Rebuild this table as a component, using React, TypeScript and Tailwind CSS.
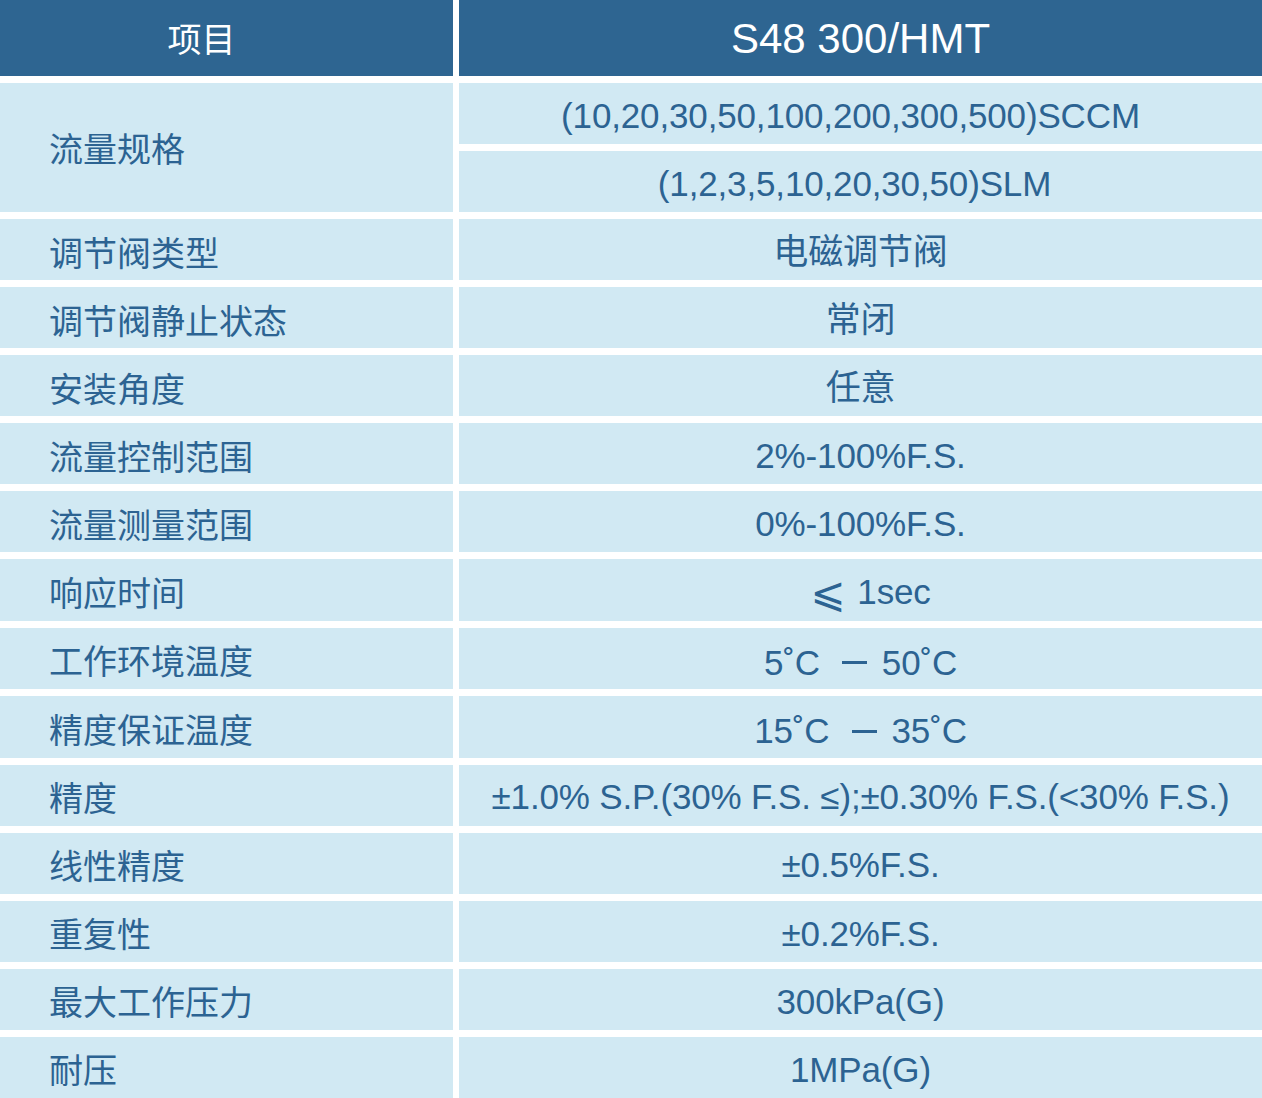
import React from 'react';

const rows: { label: string; value: React.ReactNode }[] = [
  { label: '调节阀类型', value: '电磁调节阀' },
  { label: '调节阀静止状态', value: '常闭' },
  { label: '安装角度', value: '任意' },
  { label: '流量控制范围', value: '2%-100%F.S.' },
  { label: '流量测量范围', value: '0%-100%F.S.' },
  {
    label: '响应时间',
    value: (
      <span className="flex items-center pl-[20px]">
        <span className="font-['DejaVu_Sans'] text-[42px] leading-none">⩽</span>
        <span className="ml-[12px]">1sec</span>
      </span>
    ),
  },
  {
    label: '工作环境温度',
    value: <TempRange from="5" to="50" />,
  },
  {
    label: '精度保证温度',
    value: <TempRange from="15" to="35" />,
  },
  { label: '精度', value: '±1.0% S.P.(30% F.S. ≤);±0.30% F.S.(<30% F.S.)' },
  { label: '线性精度', value: '±0.5%F.S.' },
  { label: '重复性', value: '±0.2%F.S.' },
  { label: '最大工作压力', value: '300kPa(G)' },
  { label: '耐压', value: '1MPa(G)' },
];

function TempRange({ from, to }: { from: string; to: string }) {
  return (
    <span className="flex items-center pt-[4px]">
      <span>{from}˚C</span>
      <span className="ml-[22px] mr-[15px] inline-block h-[3px] w-[25px] bg-[#2c6392]" />
      <span>{to}˚C</span>
    </span>
  );
}

const cell = 'bg-[#d1e9f3] text-[#2c6392]';

export default function App() {
  return (
    <div className="flex h-[1098px] w-[1262px] flex-col gap-[7px] bg-white font-['Liberation_Sans','Noto_Sans_CJK_SC',sans-serif] text-[35px] tracking-[-0.15px]">
      {/* header */}
      <div className="flex h-[76px] gap-[6px] text-white">
        <div className="flex w-[453px] items-center justify-center bg-[#2e6591] pr-[50px] pb-[2px] font-['Noto_Sans_CJK_SC',sans-serif] text-[34px] tracking-normal">
          项目
        </div>
        <div className="flex flex-1 items-center justify-center bg-[#2e6591] text-[42px] tracking-normal">
          S48 300/HMT
        </div>
      </div>

      {/* flow spec, two values */}
      <div className="flex h-[129px] gap-[6px]">
        <div className={`flex w-[453px] items-center pl-[49px] text-[34px] tracking-normal font-['Noto_Sans_CJK_SC',sans-serif] ${cell}`}>
          流量规格
        </div>
        <div className="flex flex-1 flex-col gap-[7px]">
          <div className={`flex flex-1 items-center justify-center pr-[20px] pt-[5px] ${cell}`}>
            (10,20,30,50,100,200,300,500)SCCM
          </div>
          <div className={`flex flex-1 items-center justify-center pr-[12px] pt-[5px] ${cell}`}>
            (1,2,3,5,10,20,30,50)SLM
          </div>
        </div>
      </div>

      <div className="flex flex-1 flex-col gap-[7px]">
        {rows.map((r) => (
          <div key={r.label} className="flex flex-1 gap-[6px]">
            <div className={`flex w-[453px] items-center pl-[49px] pt-[3px] font-['Noto_Sans_CJK_SC',sans-serif] text-[34px] tracking-normal ${cell}`}>
              {r.label}
            </div>
            <div className={`flex flex-1 items-center justify-center pt-[5px] ${cell}`}>
              {r.value}
            </div>
          </div>
        ))}
      </div>
    </div>
  );
}
